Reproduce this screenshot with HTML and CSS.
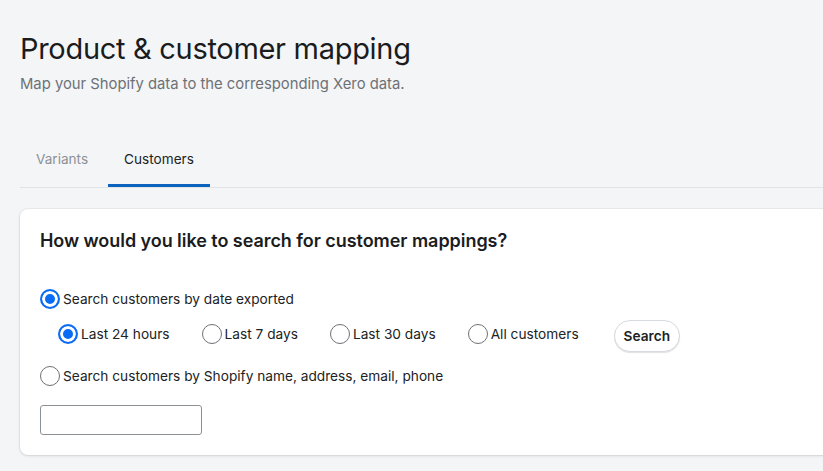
FILE: index.html
```html
<!DOCTYPE html>
<html lang="en">
<head>
    <meta charset="UTF-8">
    <meta name="viewport" content="width=device-width, initial-scale=1.0">
    <title>Product &amp; customer mapping</title>
    <link rel="stylesheet" href="styles.css">
</head>
<body>

    <div class="page">
        <!-- Page header -->
        <div class="page-header">
            <h1>Product &amp; customer mapping</h1>
            <p>Map your Shopify data to the corresponding Xero data.</p>
        </div>

        <!-- Tabs -->
        <div class="tabs">
            <button class="tab">Variants</button>
            <button class="tab active">Customers</button>
        </div>

        <!-- Search card -->
        <div class="card">
            <h2>How would you like to search for customer mappings?</h2>

            <label class="radio-row">
                <input type="radio" name="mode" checked>
                <span>Search customers by date exported</span>
            </label>

            <div class="range-row">
                <label class="radio-row">
                    <input type="radio" name="range" checked>
                    <span>Last 24 hours</span>
                </label>
                <label class="radio-row">
                    <input type="radio" name="range">
                    <span>Last 7 days</span>
                </label>
                <label class="radio-row">
                    <input type="radio" name="range">
                    <span>Last 30 days</span>
                </label>
                <label class="radio-row">
                    <input type="radio" name="range">
                    <span>All customers</span>
                </label>
                <button class="search-btn">Search</button>
            </div>

            <label class="radio-row">
                <input type="radio" name="mode">
                <span>Search customers by Shopify name, address, email, phone</span>
            </label>

            <input type="text" class="text-field">
        </div>
    </div>

</body>
</html>
```

FILE: styles.css
```css
html, body {
    overflow: hidden;
}

body {
    margin: 0;
    padding: 20px;
    background-color: #f4f5f7;
    font-family: Inter, "Liberation Sans", sans-serif;
    color: #202223;
}

.page {
    width: 840px;
}

.page-header h1 {
    margin: 11px 0 0;
    font-size: 29px;
    font-weight: 400;
    line-height: 36px;
    letter-spacing: -0.3px;
    color: #1a1c1d;
}

.page-header p {
    margin: 7px 0 0;
    font-size: 14.8px;
    line-height: 20px;
    color: #6d7175;
}

.tabs {
    display: flex;
    gap: 4px;
    margin-top: 47px;
    border-bottom: 1px solid #e1e3e5;
}

.tab {
    padding: 8px 16px 15px;
    border: none;
    border-bottom: 3px solid transparent;
    background: none;
    font-family: Inter, "Liberation Sans", sans-serif;
    font-size: 13.6px;
    line-height: 20px;
    color: #8c9196;
    cursor: pointer;
}

.tab.active {
    color: #202223;
    border-bottom-color: #0b63be;
}

.card {
    margin-top: 21px;
    padding: 20px;
    background: white;
    border-radius: 8px;
    box-shadow: 0 0 0 1px rgba(63, 63, 68, 0.05), 0 1px 3px rgba(63, 63, 68, 0.15);
}

.card h2 {
    margin: 0 0 36px;
    font-size: 18px;
    font-weight: 600;
    line-height: 24px;
    letter-spacing: -0.05px;
    color: #1a1c1d;
}

.radio-row {
    display: flex;
    align-items: center;
    gap: 3px;
    font-size: 13.7px;
    line-height: 20px;
    color: #202223;
    cursor: pointer;
}

.radio-row input {
    appearance: none;
    -webkit-appearance: none;
    margin: 0;
    width: 20px;
    height: 20px;
    border: 1px solid #6d7175;
    border-radius: 50%;
    background: white;
    flex-shrink: 0;
}

.radio-row input:checked {
    border: 2px solid #0a6cf5;
    background: #0a6cf5;
    box-shadow: inset 0 0 0 3px white;
}

.range-row {
    display: flex;
    align-items: center;
    gap: 32px;
    margin: 7px 0 14px 18px;
}

.search-btn {
    margin: 4px 0 0 3px;
    height: 32px;
    padding: 0 9px;
    border: 1px solid #d7dade;
    border-radius: 16px;
    background: white;
    box-shadow: 0 1px 1px rgba(0, 0, 0, 0.12);
    font-family: Inter, "Liberation Sans", sans-serif;
    font-size: 13.7px;
    font-weight: 600;
    color: #202223;
    cursor: pointer;
}

.text-field {
    display: block;
    margin-top: 19px;
    width: 162px;
    height: 30px;
    box-sizing: border-box;
    border: 1px solid #8c9196;
    border-radius: 3px;
}
```
